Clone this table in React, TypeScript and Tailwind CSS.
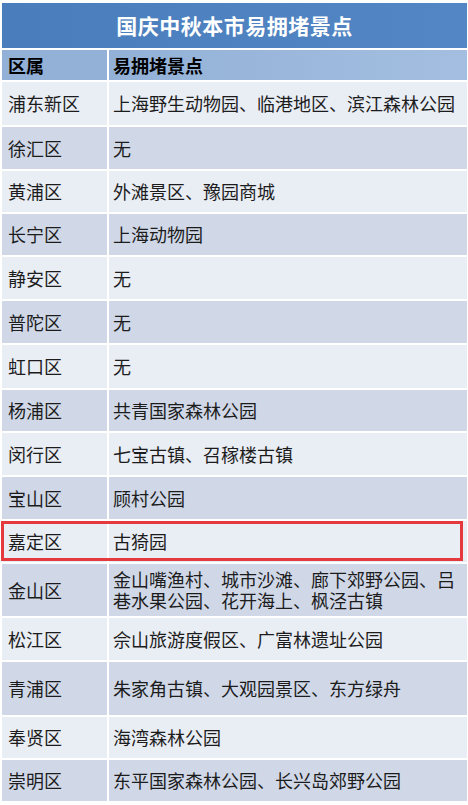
const rows = [
  { district: '浦东新区', spots: '上海野生动物园、临港地区、滨江森林公园', h: 'h-[45px]' },
  { district: '徐汇区', spots: '无', h: 'h-[44px]' },
  { district: '黄浦区', spots: '外滩景区、豫园商城', h: 'h-[43px]' },
  { district: '长宁区', spots: '上海动物园', h: 'h-[43px]' },
  { district: '静安区', spots: '无', h: 'h-[44px]' },
  { district: '普陀区', spots: '无', h: 'h-[44px]' },
  { district: '虹口区', spots: '无', h: 'h-[45px]' },
  { district: '杨浦区', spots: '共青国家森林公园', h: 'h-[43px]' },
  { district: '闵行区', spots: '七宝古镇、召稼楼古镇', h: 'h-[44px]' },
  { district: '宝山区', spots: '顾村公园', h: 'h-[44px]' },
  { district: '嘉定区', spots: '古猗园', h: 'h-[43px]', marked: true },
  { district: '金山区', spots: '金山嘴渔村、城市沙滩、廊下郊野公园、吕巷水果公园、花开海上、枫泾古镇', h: 'h-[54px]' },
  { district: '松江区', spots: '佘山旅游度假区、广富林遗址公园', h: 'h-[44px]' },
  { district: '青浦区', spots: '朱家角古镇、大观园景区、东方绿舟', h: 'h-[55px]' },
  { district: '奉贤区', spots: '海湾森林公园', h: 'h-[43px]' },
  { district: '崇明区', spots: '东平国家森林公园、长兴岛郊野公园', h: 'h-[43px]' },
];

export default function App() {
  return (
    <div
      className="w-[468px] h-[805px] bg-white pt-[3px] pl-[2px] pr-[1px] overflow-hidden"
      style={{ fontFamily: '"Noto Sans CJK SC", "Microsoft YaHei", sans-serif' }}
    >
      {/* title */}
      <div className="h-[45px] bg-gradient-to-r from-[#4a7dbb] to-[#5286c4] flex items-center justify-center text-white text-[21px] font-bold tracking-[0.5px]">
        国庆中秋本市易拥堵景点
      </div>

      {/* header */}
      <div className="mt-[2px] h-[30px] flex gap-[2px] text-[18px] font-bold text-black">
        <div className="w-[105px] bg-[#93b1d7] flex items-center pl-[6px]">区属</div>
        <div className="flex-1 bg-gradient-to-r from-[#93b1d7] to-[#a3bee0] flex items-center pl-[4px]">易拥堵景点</div>
      </div>

      {rows.map((row, i) => {
        const bg = i % 2 === 0 ? 'bg-[#e9edf4]' : 'bg-[#d0d8e8]';
        return (
          <div key={row.district} className={`relative flex gap-[2px] pt-[2px] text-[18px] text-[#1c1c1c] ${row.h}`}>
            <div className={`w-[105px] ${bg} flex items-center pl-[6px]`}>{row.district}</div>
            <div className={`flex-1 ${bg} flex items-center pl-[4px] pr-[6px] leading-[21px]`}>{row.spots}</div>
            {row.marked && (
              <div className="absolute left-[-1px] right-[4px] top-[2px] bottom-[1px] border-[3px] border-[#e53a3d]" />
            )}
          </div>
        );
      })}
    </div>
  );
}
